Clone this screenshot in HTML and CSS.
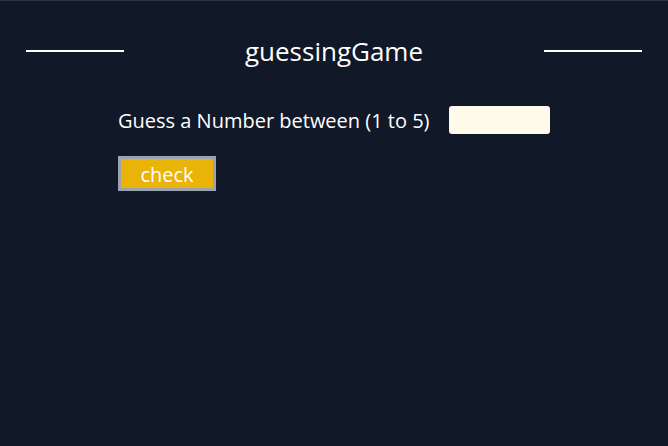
FILE: index.html
```html
<!DOCTYPE html>
<html>
<head>
<meta charset="utf-8">
<link rel="stylesheet" href="styles.css">
</head>
<body>
<header class="header">
  <span class="rule"></span>
  <h1 class="title">guessingGame</h1>
  <span class="rule"></span>
</header>
<main class="game">
  <div class="row">
    <label class="label" for="guess">Guess a Number between (1 to 5)</label>
    <input class="guess" id="guess" type="text">
  </div>
  <button class="check">check</button>
</main>
</body>
</html>
```

FILE: styles.css
```css
html, body {
  margin: 0;
  padding: 0;
  height: 100%;
}
body {
  background: #111827;
  border-top: 1px solid #2b3342;
  box-sizing: border-box;
  font-family: "Open Sans", "Noto Sans", sans-serif;
  color: #ffffff;
}
.header {
  display: flex;
  align-items: center;
  justify-content: space-between;
  padding: 32px 26px 0 26px;
  height: 36px;
}
.rule {
  display: block;
  width: 98px;
  height: 2px;
  background: #ffffff;
}
.title {
  margin: 0;
  font-size: 26px;
  font-weight: 400;
  line-height: 36px;
}
.game {
  padding: 36px 0 0 118px;
  display: flex;
  flex-direction: column;
  align-items: flex-start;
  gap: 21px;
}
.row {
  display: flex;
  align-items: center;
  gap: 19px;
}
.label {
  font-size: 20px;
  line-height: 28px;
  padding-top: 2px;
}
.guess {
  width: 101px;
  height: 28px;
  box-sizing: border-box;
  border: none;
  border-radius: 3px;
  background: #fffbeb;
  padding: 0 6px;
}
.check {
  width: 98px;
  height: 35px;
  box-sizing: border-box;
  border: 3px solid #9ca3af;
  background: #eab308;
  color: #ffffff;
  font-family: "Open Sans", "Noto Sans", sans-serif;
  font-size: 20px;
  padding: 2px 0 0 0;
  line-height: 26px;
}
```
